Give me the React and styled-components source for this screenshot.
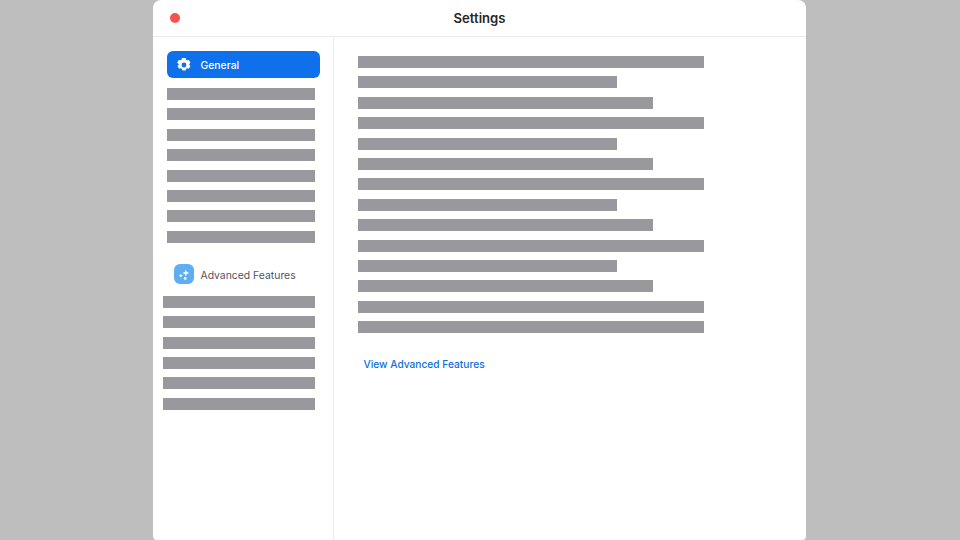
import React from "react";
import styled, { createGlobalStyle } from "styled-components";

const Global = createGlobalStyle`
  html, body { margin: 0; padding: 0; background: #bebebe; }
  body { font-family: Inter, "Liberation Sans", sans-serif; }
`;

const Page = styled.div`
  width: 960px;
  height: 540px;
  overflow: hidden;
  display: flex;
  justify-content: center;
  background: #bebebe;
`;

const Window = styled.div`
  width: 653px;
  height: 540px;
  margin-left: -1px;
  background: #fff;
  border-radius: 8px 8px 4px 4px;
  display: flex;
  flex-direction: column;
  overflow: hidden;
`;

const TitleBar = styled.header`
  height: 37px;
  flex: none;
  box-sizing: border-box;
  border-bottom: 1px solid #ececec;
  display: grid;
  grid-template-columns: 1fr auto 1fr;
  align-items: center;
  padding: 0 17px;
`;

const CloseDot = styled.span`
  width: 10px;
  height: 10px;
  border-radius: 50%;
  background: #f6524f;
  margin-top: -1px;
`;

const Title = styled.h1`
  margin: -1px 0 0;
  font-size: 13.1px;
  font-weight: 600;
  color: #262626;
`;

const Body = styled.div`
  flex: 1;
  display: flex;
  min-height: 0;
`;

const Sidebar = styled.aside`
  width: 181px;
  flex: none;
  box-sizing: border-box;
  border-right: 1px solid #ececec;
  padding: 14px 13px 0 10px;
  display: flex;
  flex-direction: column;
`;

const ActiveItem = styled.div`
  height: 27px;
  margin-left: 3.5px;
  width: 153.5px;
  border-radius: 6px;
  background: #0e71eb;
  color: #fff;
  display: flex;
  align-items: center;
  gap: 8.5px;
  padding-left: 9.5px;
  box-sizing: border-box;
  font-size: 10.4px;
  font-weight: 500;
`;

const ItemLabel = styled.span`
  margin-top: 1px;
`;

const BarList = styled.div`
  display: flex;
  flex-direction: column;
  gap: 8.4px;
  margin-top: ${(p) => p.$top}px;
  margin-left: ${(p) => p.$left || 0}px;
`;

const Bar = styled.div`
  height: 12px;
  width: ${(p) => p.$w}px;
  background: #98989d;
`;

const SectionRow = styled.div`
  display: flex;
  align-items: center;
  gap: 6.5px;
  margin-top: 21px;
  margin-left: 11px;
  height: 20px;
  font-size: 10.4px;
  color: #54545f;
`;

const SectionLabel = styled.span`
  margin-top: 3px;
`;

const IconTile = styled.span`
  width: 20px;
  height: 20px;
  border-radius: 6px;
  background: #5eaef3;
  display: flex;
  align-items: center;
  justify-content: center;
`;

const Main = styled.main`
  flex: 1;
  padding: 19px 0 0 24px;
  display: flex;
  flex-direction: column;
  align-items: flex-start;
`;

const Link = styled.a`
  margin-top: 24px;
  margin-left: 5.5px;
  font-size: 10.2px;
  font-weight: 500;
  line-height: 14px;
  color: #0e6fdc;
  cursor: pointer;
`;

const Gear = () => (
  <svg width="16" height="16" viewBox="0 0 24 24" aria-hidden="true">
    <path
      fill="#fff"
      fillRule="evenodd"
      d="M9.6 1.6h4.8l.8 2.5 1.5.9 2.6-.6 2.4 4.2-1.8 1.9v1l1.8 1.9-2.4 4.2-2.6-.6-1.5.9-.8 2.5H9.6l-.8-2.5-1.5-.9-2.6.6-2.4-4.2 1.8-1.9v-1L1.7 8.6l2.4-4.2 2.6.6 1.5-.9.8-2.5zM12 8.4a3.6 3.6 0 100 7.2 3.6 3.6 0 000-7.2z"
    />
  </svg>
);

const Sparkles = () => (
  <svg width="14" height="14" viewBox="0 0 14 14" aria-hidden="true">
    <path fill="#fff" d="M8.8 2.5l.9 2.6 2.6.9-2.6.9-.9 2.6-.9-2.6-2.6-.9 2.6-.9z" />
    <path fill="#fff" d="M3.8 6.5l.6 1.6 1.6.6-1.6.6-.6 1.6-.6-1.6-1.6-.6 1.6-.6z" />
    <circle cx="8.2" cy="11.4" r="1.4" fill="#fff" />
  </svg>
);

const mainWidths = [346, 259, 295, 346, 259, 295, 346, 259, 295, 346, 259, 295, 346, 346];

export default function App() {
  return (
    <>
      <Global />
      <Page>
        <Window>
          <TitleBar>
            <CloseDot />
            <Title>Settings</Title>
          </TitleBar>
          <Body>
            <Sidebar>
              <ActiveItem>
                <Gear />
                <ItemLabel>General</ItemLabel>
              </ActiveItem>
              <BarList $top={10} $left={3.5}>
                {Array.from({ length: 8 }, (_, i) => (
                  <Bar key={i} $w={148.5} />
                ))}
              </BarList>
              <SectionRow>
                <IconTile>
                  <Sparkles />
                </IconTile>
                <SectionLabel>Advanced Features</SectionLabel>
              </SectionRow>
              <BarList $top={12}>
                {Array.from({ length: 6 }, (_, i) => (
                  <Bar key={i} $w={152} />
                ))}
              </BarList>
            </Sidebar>
            <Main>
              <BarList $top={0}>
                {mainWidths.map((w, i) => (
                  <Bar key={i} $w={w} />
                ))}
              </BarList>
              <Link>View Advanced Features</Link>
            </Main>
          </Body>
        </Window>
      </Page>
    </>
  );
}
